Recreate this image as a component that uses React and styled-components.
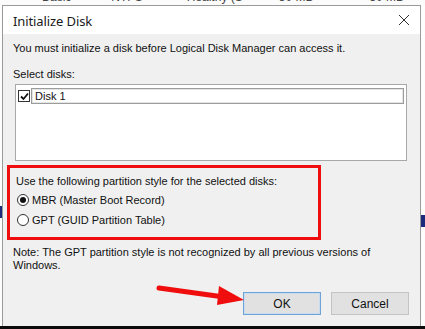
import React from "react";
import styled, { createGlobalStyle } from "styled-components";

const Global = createGlobalStyle`
  html, body { margin: 0; padding: 0; background: #fafafa; }
  body { font-family: "Liberation Sans", Arial, sans-serif; }
  * { box-sizing: border-box; }
`;

const Page = styled.div`
  width: 425px;
  height: 329px;
  overflow: hidden;
  display: flex;
  flex-direction: column;
  background: #fbfbfb;
`;

const BackStrip = styled.div`
  height: 5px;
  overflow: hidden;
  display: flex;
  flex-shrink: 0;
  color: #444;
  font-size: 12px;
  line-height: 12px;
`;

const BackCell = styled.span`
  margin-top: -9px;
  margin-left: ${(p) => p.$ml}px;
  white-space: nowrap;
`;

const Middle = styled.div`
  flex: 1;
  display: flex;
  min-height: 0;
`;

const Gutter = styled.div`
  width: ${(p) => p.$w}px;
  flex-shrink: 0;
  display: flex;
  flex-direction: column;
  background: #fdfdfd;
  padding-top: ${(p) => p.$stripe}px;
`;

const Stripe = styled.div`
  height: 12px;
  background: #1b2a7a;
`;

const Dialog = styled.div`
  flex: 1;
  display: flex;
  flex-direction: column;
  border: 1px solid #9a9a9a;
  border-bottom: none;
  background: #f0f0f0;
  height: 321px;
`;

const TitleBar = styled.div`
  height: 28px;
  flex-shrink: 0;
  background: #ffffff;
  display: flex;
  align-items: center;
  justify-content: space-between;
  padding: 0 9px 0 10px;
`;

const Title = styled.span`
  font-family: "Noto Sans", "Liberation Sans", sans-serif;
  font-size: 13px;
  color: #1a1a1a;
  letter-spacing: -0.1px;
  margin-top: 1px;
`;

const CloseBtn = styled.div`
  width: 14px;
  height: 14px;
  display: flex;
  align-items: center;
  justify-content: center;
`;

const Body = styled.div`
  flex: 1;
  display: flex;
  flex-direction: column;
  padding: 8px 0 0 0;
  font-size: 11px;
  color: #111;
`;

const Text = styled.div`
  padding-left: ${(p) => p.$pl ?? 10}px;
  line-height: ${(p) => p.$lh ?? 13}px;
  margin-top: ${(p) => p.$mt ?? 0}px;
`;

const ListBox = styled.div`
  margin: 3px 0 0 12px;
  width: 392px;
  height: 77px;
  background: #fff;
  border: 1px solid #a8a8a8;
  padding: 3px 2px 0 2px;
`;

const ListRow = styled.div`
  display: flex;
  align-items: center;
  height: 16px;
  gap: 1px;
`;

const Check = styled.div`
  width: 12px;
  height: 12px;
  border: 1px solid #333;
  background: #fff;
  display: flex;
  align-items: center;
  justify-content: center;
  flex-shrink: 0;
`;

const RowLabel = styled.div`
  flex: 1;
  height: 16px;
  border: 1px solid #9c9c9c;
  box-shadow: inset 0 0 0 1px #e4e4e4;
  padding-left: 3px;
  display: flex;
  align-items: center;
  font-size: 11px;
`;

const RedBox = styled.div`
  margin: 4px 0 0 4px;
  width: 314px;
  height: 75px;
  border: 3px solid #f00d0d;
  padding: 7px 0 0 6px;
  display: flex;
  flex-direction: column;
`;

const RadioRow = styled.div`
  display: flex;
  align-items: center;
  gap: 3px;
  height: 20px;
  margin-top: ${(p) => p.$mt ?? 0}px;
  margin-left: 1px;
`;

const Radio = styled.div`
  width: 12px;
  height: 12px;
  border-radius: 50%;
  border: 1px solid #333;
  background: #fff;
  display: flex;
  align-items: center;
  justify-content: center;
  flex-shrink: 0;
  &::after {
    content: "";
    width: 6px;
    height: 6px;
    border-radius: 50%;
    background: ${(p) => (p.$checked ? "#111" : "transparent")};
  }
`;

const Footer = styled.div`
  display: flex;
  align-items: center;
  justify-content: flex-end;
  gap: 10px;
  padding: 0 11px 0 0;
  margin-top: 20px;
  position: relative;
`;

const Button = styled.div`
  width: 78px;
  height: 23px;
  display: flex;
  align-items: center;
  justify-content: center;
  background: #e1e1e1;
  border: 1px solid ${(p) => (p.$focus ? "#6fa3d8" : "#c4c4c4")};
  box-shadow: ${(p) => (p.$focus ? "inset 0 0 0 1px #c8dcf0" : "none")};
  font-size: 12px;
  color: #111;
`;

const Arrow = styled.svg`
  position: absolute;
  left: 153px;
  top: -8px;
`;

const BlackBar = styled.div`
  height: 3px;
  background: #0a0a0a;
  flex-shrink: 0;
`;

export default function App() {
  return (
    <>
      <Global />
      <Page>
        <BackStrip>
          <BackCell $ml={42}>Basic</BackCell>
          <BackCell $ml={40}>NTFS</BackCell>
          <BackCell $ml={44}>Healthy (S</BackCell>
          <BackCell $ml={36}>50 MB</BackCell>
          <BackCell $ml={56}>30 MB</BackCell>
        </BackStrip>
        <Middle>
          <Gutter $w={2} $stripe={201}>
            <Stripe />
          </Gutter>
          <Dialog>
            <TitleBar>
              <Title>Initialize Disk</Title>
              <CloseBtn>
                <svg width="12" height="12" viewBox="0 0 12 12">
                  <path d="M1 1L11 11M11 1L1 11" stroke="#333" strokeWidth="1" />
                </svg>
              </CloseBtn>
            </TitleBar>
            <Body>
              <Text>You must initialize a disk before Logical Disk Manager can access it.</Text>
              <Text $mt={13}>Select disks:</Text>
              <ListBox>
                <ListRow>
                  <Check>
                    <svg width="9" height="9" viewBox="0 0 9 9">
                      <path d="M1 4.5L3.5 7L8 1.5" stroke="#111" strokeWidth="1.8" fill="none" />
                    </svg>
                  </Check>
                  <RowLabel>Disk 1</RowLabel>
                </ListRow>
              </ListBox>
              <RedBox>
                <Text $pl={0}>Use the following partition style for the selected disks:</Text>
                <RadioRow $mt={2}>
                  <Radio $checked />
                  <span>MBR (Master Boot Record)</span>
                </RadioRow>
                <RadioRow>
                  <Radio />
                  <span>GPT (GUID Partition Table)</span>
                </RadioRow>
              </RedBox>
              <Text $mt={6}>
                Note: The GPT partition style is not recognized by all previous versions of
                <br />
                Windows.
              </Text>
              <Footer>
                <Arrow width="92" height="22" viewBox="0 0 92 22">
                  <path d="M3 4L68 13" stroke="#f00d0d" strokeWidth="5" strokeLinecap="round" />
                  <polygon points="63,2 88,16 61,21" fill="#f00d0d" />
                </Arrow>
                <Button $focus>OK</Button>
                <Button>Cancel</Button>
              </Footer>
            </Body>
          </Dialog>
          <Gutter $w={4} $stripe={210}>
            <Stripe />
          </Gutter>
        </Middle>
        <BlackBar />
      </Page>
    </>
  );
}
